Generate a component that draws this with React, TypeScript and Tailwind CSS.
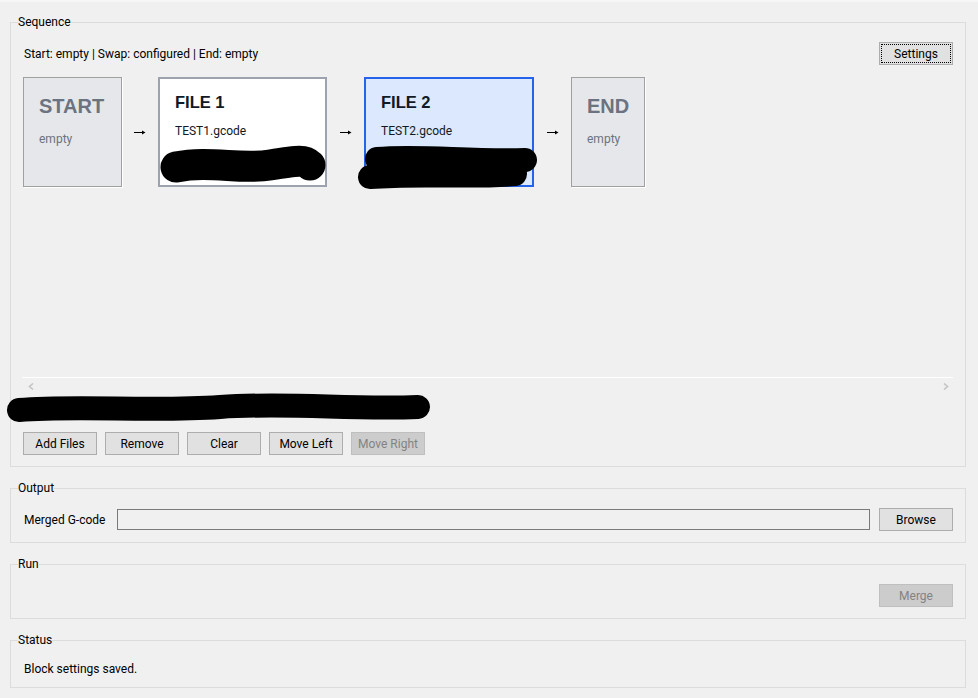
import React from "react";

const UI = { fontFamily: 'Roboto, "Noto Sans", sans-serif' };
const ARIAL = { fontFamily: '"Liberation Sans", Arial, sans-serif' };

function Btn({ children, disabled, focused }: { children: React.ReactNode; disabled?: boolean; focused?: boolean }) {
  return (
    <div
      className={
        "w-[74px] h-[23px] flex items-center justify-center text-[12px] border " +
        (disabled
          ? "bg-[#cccccc] border-[#bfbfbf] text-[#838383]"
          : "bg-[#e1e1e1] border-[#adadad] text-black") +
        (focused ? " outline-1 outline-dotted outline-black outline-offset-[-3px]" : "")
      }
    >
      {children}
    </div>
  );
}

function Group({ title, children, className }: { title: string; children: React.ReactNode; className?: string }) {
  return (
    <div className={"relative border border-[#dcdcdc] " + (className ?? "")}>
      <span className="absolute left-[7px] top-[-9px] bg-[#f0f0f0] text-[12px] leading-[16px] text-black">{title}</span>
      {children}
    </div>
  );
}

function Arrow({ w }: { w: string }) {
  return (
    <div className={w + " flex items-center justify-center"}>
      <svg width="12" height="5" viewBox="0 0 12 5">
        <path d="M0 2.5 H10" stroke="#000" strokeWidth="1" />
        <path d="M8 0.5 L11.5 2.5 L8 4.5 Z" fill="#000" />
      </svg>
    </div>
  );
}

export default function App() {
  return (
    <div className="relative w-[978px] h-[698px] bg-[#f0f0f0] overflow-hidden text-black" style={UI}>
      <div className="h-[2px] bg-[#f6f6f6]" />
      <div className="pl-[10px] pr-[12px] pt-[20px] flex flex-col gap-[21px]">
        <Group title="Sequence" className="px-[12px] pt-[19px] pb-[11px]">
          <div className="h-[23px] flex items-center justify-between">
            <span className="text-[12px] leading-[16px] pl-[1px]">Start: empty | Swap: configured | End: empty</span>
            <Btn focused>Settings</Btn>
          </div>
          <div className="mt-[12px] h-[300px]">
            <div className="flex h-[110px]">
              <div className="w-[99px] bg-[#e5e7eb] border border-[#a0a0a0] shadow-[1px_1px_0_#ffffff] pl-[15px] pt-[16px]">
                <div className="text-[20px] leading-[24px] font-bold text-[#6b7280]" style={ARIAL}>START</div>
                <div className="mt-[13px] text-[12px] leading-[16px] text-[#6b7280]">empty</div>
              </div>
              <Arrow w="w-[36px]" />
              <div className="w-[169px] bg-white border-2 border-[#9ca3af] pl-[15px] pt-[13px]">
                <div className="text-[16.5px] leading-[20px] font-bold text-[#111827]" style={ARIAL}>FILE 1</div>
                <div className="mt-[11px] text-[12px] leading-[16px] text-[#111827]">TEST1.gcode</div>
              </div>
              <Arrow w="w-[37px]" />
              <div className="w-[170px] bg-[#dbe8fd] border-2 border-[#2563eb] pl-[15px] pt-[13px]">
                <div className="text-[16.5px] leading-[20px] font-bold text-[#111827]" style={ARIAL}>FILE 2</div>
                <div className="mt-[11px] text-[12px] leading-[16px] text-[#111827]">TEST2.gcode</div>
              </div>
              <Arrow w="w-[37px]" />
              <div className="w-[74px] bg-[#e5e7eb] border border-[#a0a0a0] shadow-[1px_1px_0_#ffffff] pl-[15px] pt-[16px]">
                <div className="text-[20px] leading-[24px] font-bold text-[#6b7280]" style={ARIAL}>END</div>
                <div className="mt-[13px] text-[12px] leading-[16px] text-[#6b7280]">empty</div>
              </div>
            </div>
          </div>
          <div className="-ml-[1px] h-[17px] border-t border-white flex items-center justify-between pl-[6px] pr-[4px]">
            <svg width="6" height="7" viewBox="0 0 6 7">
              <path d="M5 0.5 L1.5 3.5 L5 6.5" fill="none" stroke="#c4c4c4" strokeWidth="1.6" />
            </svg>
            <svg width="6" height="7" viewBox="0 0 6 7">
              <path d="M1 0.5 L4.5 3.5 L1 6.5" fill="none" stroke="#c4c4c4" strokeWidth="1.6" />
            </svg>
          </div>
          <div className="h-[38px]" />
          <div className="flex gap-[8px]">
            <Btn>Add Files</Btn>
            <Btn>Remove</Btn>
            <Btn>Clear</Btn>
            <Btn>Move Left</Btn>
            <Btn disabled>Move Right</Btn>
          </div>
        </Group>

        <Group title="Output" className="px-[12px] pt-[19px] pb-[11px]">
          <div className="h-[23px] flex items-center">
            <span className="w-[94px] text-[12px] leading-[16px] pl-[1px]">Merged G-code</span>
            <div className="flex-1 h-[21px] border border-[#7a7a7a] bg-[#f0f0f0]" />
            <div className="ml-[9px]">
              <Btn>Browse</Btn>
            </div>
          </div>
        </Group>

        <Group title="Run" className="px-[12px] pt-[19px] pb-[11px]">
          <div className="h-[23px] flex items-center justify-end">
            <Btn disabled>Merge</Btn>
          </div>
        </Group>

        <Group title="Status" className="px-[12px] pt-[20px] pb-[10px]">
          <div className="h-[16px] text-[12px] leading-[16px] pl-[1px]">Block settings saved.</div>
        </Group>
      </div>

      <svg className="absolute left-0 top-0 pointer-events-none" width="978" height="698" viewBox="0 0 978 698">
        <path d="M176 167 C 210 160, 240 170, 270 165 S 305 160, 310 165" fill="none" stroke="#000" strokeWidth="31" strokeLinecap="round" />
        <path d="M377 159 C 420 155, 470 162, 525 160" fill="none" stroke="#000" strokeWidth="24" strokeLinecap="round" />
        <path d="M370 177 C 420 173, 470 178, 515 174" fill="none" stroke="#000" strokeWidth="24" strokeLinecap="round" />
        <path d="M19 410 C 80 405, 150 412, 220 407 S 350 410, 418 407" fill="none" stroke="#000" strokeWidth="24" strokeLinecap="round" />
      </svg>
    </div>
  );
}
